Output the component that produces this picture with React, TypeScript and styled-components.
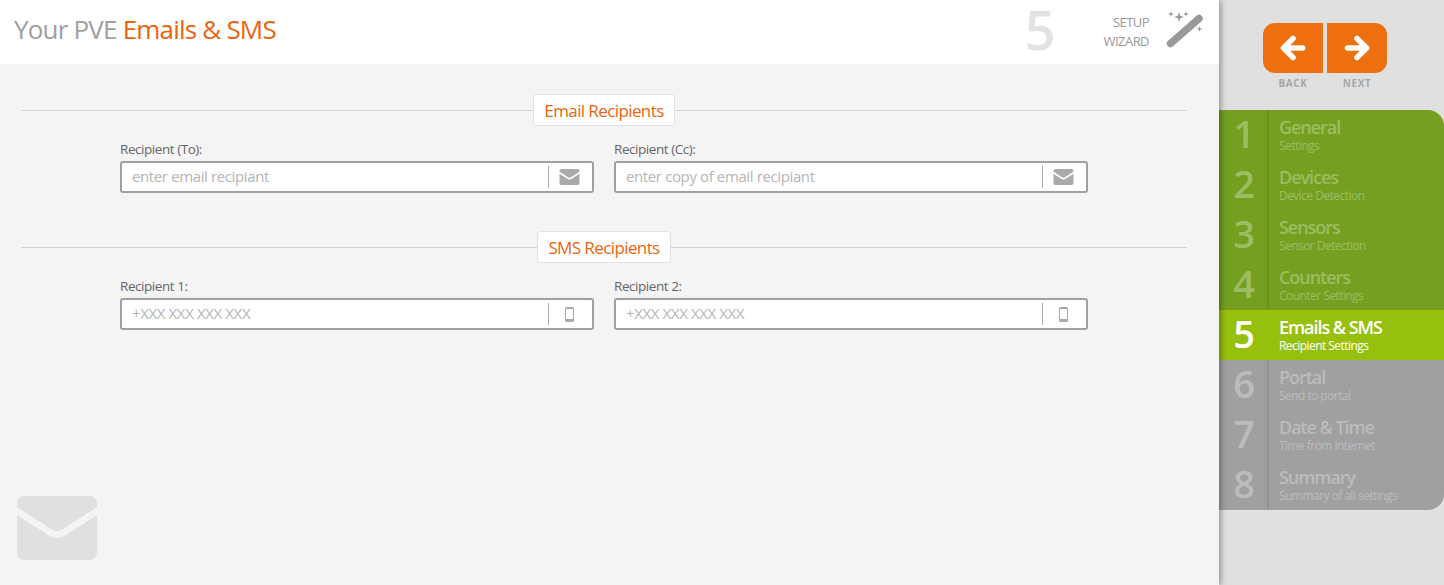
import styled, { createGlobalStyle } from 'styled-components'
import { FC } from 'react'

const steps = [
  { title: 'General', sub: 'Settings', state: 'done' },
  { title: 'Devices', sub: 'Device Detection', state: 'done' },
  { title: 'Sensors', sub: 'Sensor Detection', state: 'done' },
  { title: 'Counters', sub: 'Counter Settings', state: 'done' },
  { title: 'Emails & SMS', sub: 'Recipient Settings', state: 'active' },
  { title: 'Portal', sub: 'Send to portal', state: 'todo' },
  { title: 'Date & Time', sub: 'Time from internet', state: 'todo' },
  { title: 'Summary', sub: 'Summary of all settings', state: 'todo' },
] as const

type StepState = 'done' | 'active' | 'todo'

const MailIcon: FC = () => (
  <svg width="21" height="16" viewBox="0 0 80 64">
    <path fill="#aaa" d="M8 0h64c5 0 8 3 8 8v3L46 33c-4 2.500-8 2.500-12 0L0 11V8c0-5 3-8 8-8z" />
    <path fill="#aaa" d="M0 19l31 20c6 3.500 12 3.500 18 0l31-20v37c0 5-3 8-8 8H8c-5 0-8-3-8-8z" />
  </svg>
)

const PhoneIcon: FC = () => (
  <svg width="9" height="15" viewBox="0 0 9 15">
    <rect x="0" y="0" width="9" height="15" rx="1.500" fill="#a4abb1" />
    <rect x="1" y="2" width="7" height="10" fill="#fff" />
  </svg>
)

const WandIcon: FC = () => (
  <svg width="38" height="38" viewBox="0 0 38 38">
    <path d="M4.500 33.500L24 16.500" fill="none" stroke="#999" strokeWidth="7.500" strokeLinecap="round" />
    <path d="M26.500 14.300L33 8.500" fill="none" stroke="#999" strokeWidth="7.500" strokeLinecap="round" />
    <path
      fill="#999"
      d="M13 2l1.200 3.800 3.800 1.200-3.800 1.200L13 12l-1.200-3.800L8 7l3.800-1.200zM5 1l.7 2.300 2.300.7-2.300.7L5 7l-.7-2.300L2 4l2.300-.7zM20 1l.7 2.300 2.300.7-2.300.7L20 7l-.7-2.300L17 4l2.300-.7zM33.500 16l.7 2.300 2.300.7-2.300.7-.7 2.300-.7-2.300-2.300-.7 2.300-.7z"
    />
  </svg>
)

const ArrowIcon: FC<{ flip?: boolean }> = ({ flip }) => (
  <svg width="26" height="26" viewBox="0 0 26 26" style={flip ? { transform: 'scaleX(-1)' } : undefined}>
    <path d="M13 3.500L3.500 13 13 22.500M4.500 13h18" fill="none" stroke="#fff" strokeWidth="5.500" strokeLinecap="round" strokeLinejoin="round" />
  </svg>
)

const Field: FC<{ label: string; placeholder: string; phone?: boolean }> = ({ label, placeholder, phone }) => (
  <FieldWrap>
    <FieldLabel>{label}</FieldLabel>
    <InputBox>
      <TextInput placeholder={placeholder} />
      <InputIcon>{phone ? <PhoneIcon /> : <MailIcon />}</InputIcon>
    </InputBox>
  </FieldWrap>
)

export default function App() {
  return (
    <Page>
      <GlobalStyle />
      <Main>
        <Header>
          <Title>
            Your PVE <em>Emails &amp; SMS</em>
          </Title>
          <HeaderRight>
            <BigStep>5</BigStep>
            <WizardText>
              SETUP
              <br />
              WIZARD
            </WizardText>
            <WandIcon />
          </HeaderRight>
        </Header>
        <Content>
          <Section>
            <Legend>
              <LegendLabel>Email Recipients</LegendLabel>
            </Legend>
            <Fields>
              <Field label="Recipient (To):" placeholder="enter email recipiant" />
              <Field label="Recipient (Cc):" placeholder="enter copy of email recipiant" />
            </Fields>
          </Section>
          <Section>
            <Legend>
              <LegendLabel>SMS Recipients</LegendLabel>
            </Legend>
            <Fields>
              <Field label="Recipient 1:" placeholder="+XXX XXX XXX XXX" phone />
              <Field label="Recipient 2:" placeholder="+XXX XXX XXX XXX" phone />
            </Fields>
          </Section>
          <Watermark>
            <svg width="80" height="64" viewBox="0 0 80 64">
              <path fill="#e0e0e0" d="M8 0h64c5 0 8 3 8 8v3L46 33c-4 2.500-8 2.500-12 0L0 11V8c0-5 3-8 8-8z" />
              <path fill="#e0e0e0" d="M0 19l31 20c6 3.500 12 3.500 18 0l31-20v37c0 5-3 8-8 8H8c-5 0-8-3-8-8z" />
            </svg>
          </Watermark>
        </Content>
      </Main>
      <Side>
        <NavButtons>
          <NavCol>
            <NavButton $side="left">
              <ArrowIcon />
            </NavButton>
            <NavCaption>BACK</NavCaption>
          </NavCol>
          <NavCol>
            <NavButton $side="right">
              <ArrowIcon flip />
            </NavButton>
            <NavCaption>NEXT</NavCaption>
          </NavCol>
        </NavButtons>
        <StepList>
          {steps.map((s, i) => (
            <Step key={s.title} $state={s.state}>
              <StepNum $active={s.state === 'active'}>{i + 1}</StepNum>
              <StepText>
                <StepTitle>{s.title}</StepTitle>
                <StepSub>{s.sub}</StepSub>
              </StepText>
            </Step>
          ))}
        </StepList>
      </Side>
    </Page>
  )
}

const font = `"Open Sans", "Noto Sans", sans-serif`

const GlobalStyle = createGlobalStyle`
  html, body { margin: 0; padding: 0; height: 100%; overflow: hidden; }
  body { font-family: ${font}; background: #e0e0e0; }
  * { box-sizing: border-box; }
`

const Page = styled.div`
  display: flex;
  width: 1444px;
  height: 585px;
  overflow: hidden;
`

const Main = styled.div`
  width: 1219px;
  height: 585px;
  display: flex;
  flex-direction: column;
  background: #f4f4f4;
  box-shadow: 2px 0 6px rgba(0, 0, 0, 0.35);
  position: relative;
  z-index: 1;
`

const Header = styled.header`
  height: 64px;
  background: #fff;
  display: flex;
  align-items: center;
  justify-content: space-between;
  padding: 0 15px 6px 14px;
`

const Title = styled.h1`
  margin: 0;
  font-size: 26px;
  font-weight: 400;
  letter-spacing: -0.8px;
  color: #a0a0a0;

  em {
    font-style: normal;
    color: #e8650f;
  }
`

const HeaderRight = styled.div`
  display: flex;
  align-items: center;
`

const BigStep = styled.div`
  height: 58px;
  font-size: 54px;
  font-weight: 600;
  line-height: 58px;
  color: #e2e2e2;
  margin-right: 48px;
`

const WizardText = styled.div`
  font-size: 13px;
  font-weight: 500;
  line-height: 19px;
  letter-spacing: -0.55px;
  color: #999;
  text-align: right;
  margin-right: 17px;
  padding-top: 6px;
`

const Content = styled.main`
  flex: 1;
  position: relative;
  padding: 30px 32px 0 21px;
`

const Section = styled.section`
  margin-bottom: 38px;
`

const Legend = styled.div`
  display: flex;
  align-items: center;
  justify-content: center;
  height: 32px;
  background: linear-gradient(#d3d3d3, #d3d3d3) center / 100% 1px no-repeat;
`

const LegendLabel = styled.span`
  height: 32px;
  padding: 0 10px;
  display: flex;
  align-items: center;
  background: #fff;
  border: 1px solid #e2e2e2;
  border-radius: 3px;
  font-size: 17px;
  letter-spacing: -0.6px;
  color: #e8650f;
`

const Fields = styled.div`
  display: flex;
  gap: 20px;
  padding: 15px 0 0 99px;
`

const FieldWrap = styled.div`
  width: 474px;
`

const FieldLabel = styled.label`
  display: block;
  height: 20px;
  font-size: 13.500px;
  font-weight: 500;
  line-height: 16px;
  letter-spacing: -0.45px;
  color: #666;
`

const InputBox = styled.div`
  height: 32px;
  display: flex;
  align-items: center;
  background: #fff;
  border: 2px solid #a0a0a0;
  border-radius: 3px;
`

const TextInput = styled.input`
  flex: 1;
  min-width: 0;
  border: 0;
  outline: 0;
  background: none;
  padding: 0 10px 2px;
  font-family: ${font};
  font-size: 15px;
  letter-spacing: -0.38px;

  &::placeholder {
    color: #b5b5b5;
    opacity: 1;
  }
`

const InputIcon = styled.div`
  width: 44px;
  height: 22px;
  border-left: 1px solid #a8a8a8;
  display: flex;
  align-items: center;
  justify-content: center;
  padding-right: 2px;
`

const Watermark = styled.div`
  position: absolute;
  left: 17px;
  bottom: 25px;
  line-height: 0;
`

const Side = styled.aside`
  width: 225px;
  height: 585px;
  background: #e0e0e0;
`

const NavButtons = styled.div`
  display: flex;
  justify-content: center;
  gap: 4px;
  padding: 23px 13px 0 0;
  height: 110px;
`

const NavCol = styled.div`
  display: flex;
  flex-direction: column;
  align-items: center;
`

const NavButton = styled.button<{ $side: 'left' | 'right' }>`
  width: 60px;
  height: 50px;
  padding: 0;
  border: 0;
  background: #ed6f0f;
  display: flex;
  align-items: center;
  justify-content: center;
  border-radius: ${(p) => (p.$side === 'left' ? '12px 0 0 12px' : '0 12px 12px 0')};
`

const NavCaption = styled.div`
  margin-top: 3px;
  font-size: 10px;
  font-weight: 700;
  letter-spacing: 0.6px;
  color: #a6a6a6;
`

const StepList = styled.nav`
  height: 400px;
  border-radius: 0 16px 16px 0;
  overflow: hidden;
`

const stepBg: Record<StepState, string> = {
  done: '#749f21',
  active: '#97bf0d',
  todo: '#a0a0a0',
}

const Step = styled.div<{ $state: StepState }>`
  height: 50px;
  display: flex;
  background: ${(p) => stepBg[p.$state]};
  color: ${(p) => (p.$state === 'done' ? '#9dbd62' : p.$state === 'todo' ? '#bcbcbc' : '#fff')};
`

const StepNum = styled.div<{ $active: boolean }>`
  width: 50px;
  height: 50px;
  text-align: center;
  font-size: 38px;
  font-weight: 600;
  line-height: 46px;
  box-shadow: ${(p) => (p.$active ? 'none' : 'inset -5px 0 3px -3px rgba(0,0,0,0.1)')};
`

const StepText = styled.div`
  padding: 7px 0 0 10px;
  display: flex;
  flex-direction: column;
`

const StepTitle = styled.div`
  font-size: 18px;
  font-weight: 600;
  line-height: 21px;
  letter-spacing: -1.05px;
`

const StepSub = styled.div`
  font-size: 12px;
  line-height: 15px;
  letter-spacing: -0.55px;
`
